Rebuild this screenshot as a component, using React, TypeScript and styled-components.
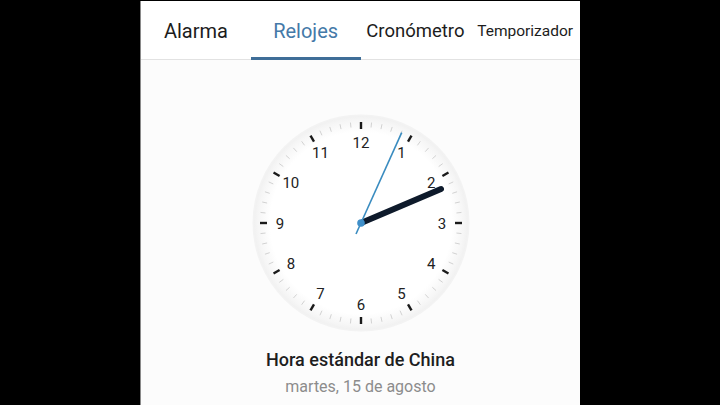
import React from 'react';
import styled, {createGlobalStyle} from 'styled-components';

const GlobalStyle = createGlobalStyle`
  html, body {
    margin: 0;
    padding: 0;
    background: #000;
  }
  body {
    width: 720px;
    height: 405px;
    overflow: hidden;
    font-family: Roboto, "Noto Sans", sans-serif;
  }
`;

const Page = styled.div`
  width: 720px;
  height: 405px;
  display: flex;
  justify-content: center;
  padding-top: 1px;
  box-sizing: border-box;
`;

const Screen = styled.div`
  width: 440px;
  height: 404px;
  background: #fcfcfc;
  border-left: 1px solid #8a8a8a;
  box-sizing: border-box;
  display: flex;
  flex-direction: column;
  align-items: center;
  overflow: hidden;
`;

const TabBar = styled.div`
  width: 100%;
  height: 59px;
  display: grid;
  grid-template-columns: repeat(4, 1fr);
  border-bottom: 1px solid #e2e2e2;
  box-sizing: border-box;
  background: #fff;
`;

const Tab = styled.div<{$active?: boolean; $size: number}>`
  display: flex;
  align-items: center;
  justify-content: center;
  font-size: ${p => p.$size}px;
  color: ${p => (p.$active ? '#4479a8' : '#1c1c1c')};
  white-space: nowrap;
  box-shadow: ${p => (p.$active ? 'inset 0 -3px 0 #3f6e98' : 'none')};
  margin-bottom: -1px;
`;

const ClockWrap = styled.div`
  margin-top: 53px;
  width: 220px;
  height: 220px;
`;

const ZoneName = styled.div`
  margin-top: 15px;
  font-size: 18px;
  font-weight: 500;
  color: #1e1e1e;
  line-height: 24px;
`;

const DateLine = styled.div`
  margin-top: 5px;
  font-size: 16px;
  color: #8c8c8c;
  line-height: 20px;
`;

const tabs = [
  {label: 'Alarma', size: 20},
  {label: 'Relojes', size: 20, active: true},
  {label: 'Cronómetro', size: 18.5},
  {label: 'Temporizador', size: 15.5},
];

function Clock() {
  const c = 110;
  const ticks = Array.from({length: 60}, (_, i) => {
    const a = (i * 6 * Math.PI) / 180;
    const major = i % 5 === 0;
    const r1 = major ? 94 : 96;
    const r2 = 101;
    return (
      <line
        key={i}
        x1={c + r1 * Math.sin(a)}
        y1={c - r1 * Math.cos(a)}
        x2={c + r2 * Math.sin(a)}
        y2={c - r2 * Math.cos(a)}
        stroke={major ? '#1a1a1a' : '#d2d2d2'}
        strokeWidth={major ? 2.4 : 1}
      />
    );
  });
  const nums = Array.from({length: 12}, (_, i) => {
    const n = i + 1;
    const a = (n * 30 * Math.PI) / 180;
    const r = 81;
    return (
      <text
        key={n}
        x={c + r * Math.sin(a)}
        y={c - r * Math.cos(a) + 5.5}
        textAnchor="middle"
        fontSize="15"
        fill="#222"
        fontFamily="Roboto, sans-serif"
      >
        {n}
      </text>
    );
  });
  return (
    <svg width="220" height="220" viewBox="0 0 220 220">
      <defs>
        <radialGradient id="face" cx="50%" cy="50%" r="50%">
          <stop offset="0%" stopColor="#ffffff" />
          <stop offset="85%" stopColor="#ffffff" />
          <stop offset="96%" stopColor="#f6f6f6" />
          <stop offset="100%" stopColor="#f1f1f1" />
        </radialGradient>
      </defs>
      <circle cx={c} cy={c} r={108.5} fill="#f3f3f3" />
      <circle cx={c} cy={c} r={107} fill="url(#face)" />
      {ticks}
      {nums}
      <line x1={c} y1={c} x2={190} y2={76} stroke="#0e1a2b" strokeWidth={6} strokeLinecap="round" />
      <line x1={105} y1={121} x2={150.7} y2={19.7} stroke="#3a8cc0" strokeWidth={1.6} />
      <circle cx={c} cy={c} r={3.8} fill="#3f8fc9" />
    </svg>
  );
}

export default function App() {
  return (
    <>
      <GlobalStyle />
      <Page>
        <Screen>
          <TabBar>
            {tabs.map(t => (
              <Tab key={t.label} $active={t.active} $size={t.size}>
                {t.label}
              </Tab>
            ))}
          </TabBar>
          <ClockWrap>
            <Clock />
          </ClockWrap>
          <ZoneName>Hora estándar de China</ZoneName>
          <DateLine>martes, 15 de agosto</DateLine>
        </Screen>
      </Page>
    </>
  );
}
